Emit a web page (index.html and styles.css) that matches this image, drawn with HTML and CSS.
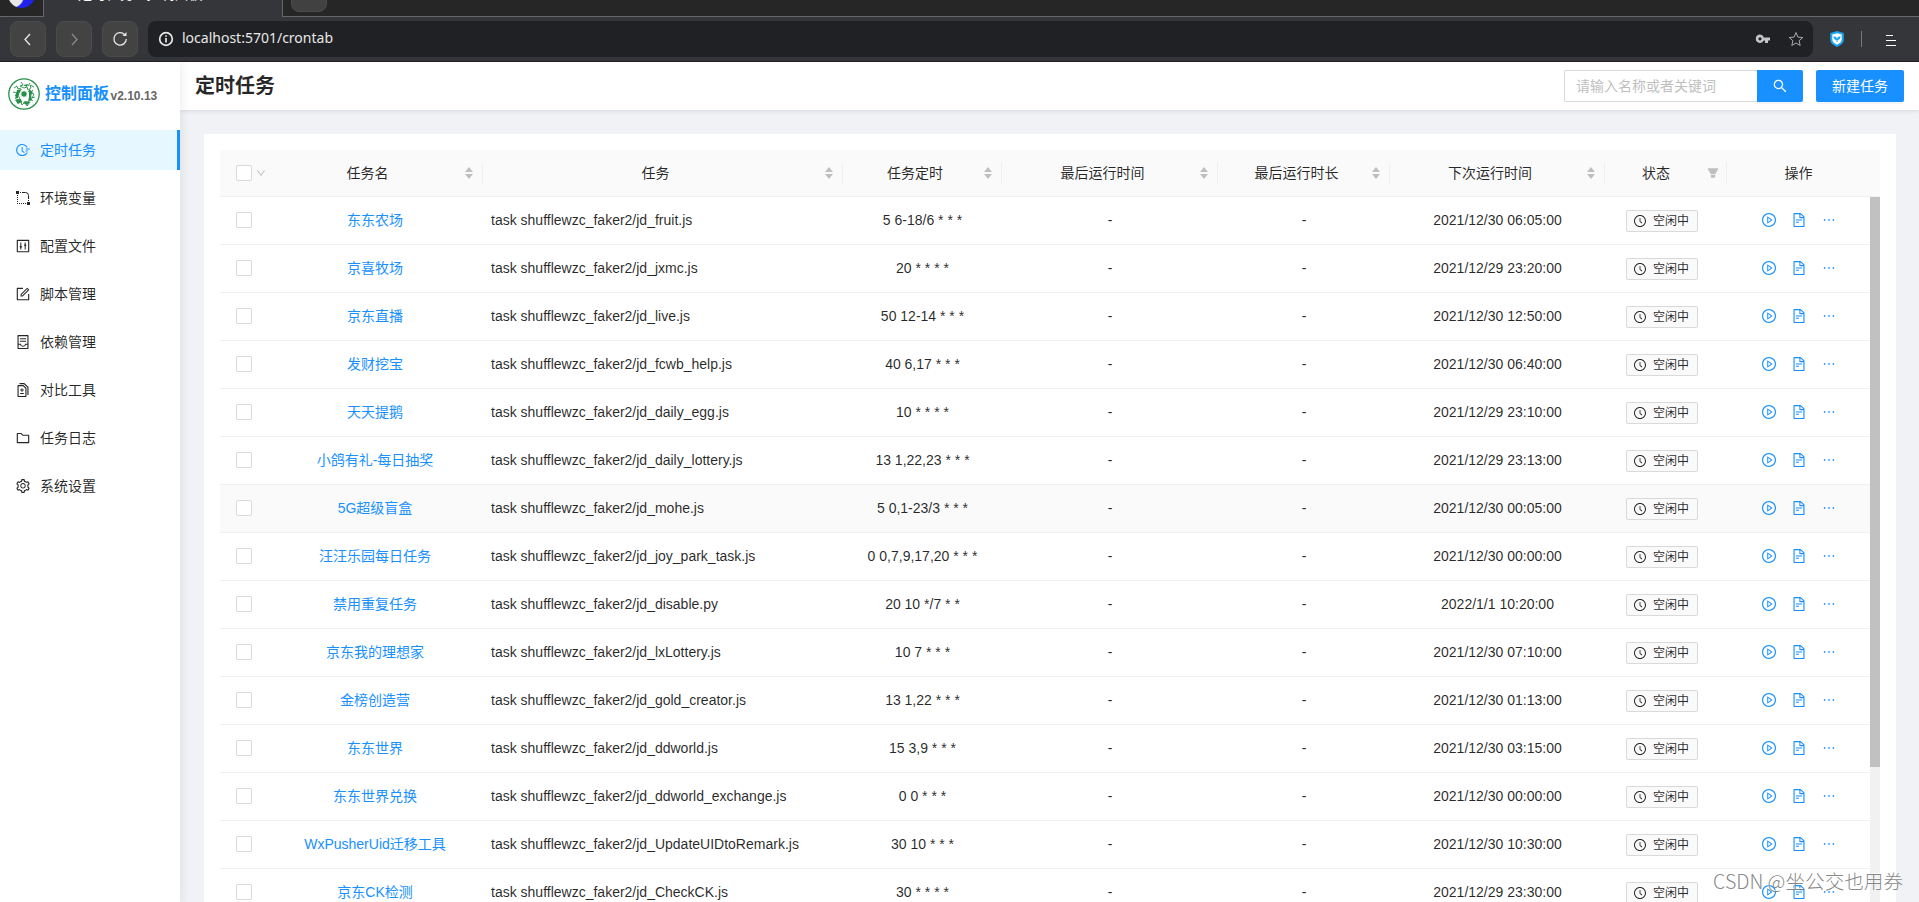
FILE: index.html
```html
<!DOCTYPE html>
<html lang="zh-CN">
	<head>
		<meta charset="utf-8">
		<title>定时任务 - 控制面板</title>
		<link rel="stylesheet" href="styles.css">
	</head>
	<body>
		<svg class="sprite" xmlns="http://www.w3.org/2000/svg">
			<symbol id="i-time" viewBox="64 64 896 896"><path d="M945 412H689c-4.400 0-8 3.600-8 8v48c0 4.400 3.600 8 8 8h256c4.400 0 8-3.600 8-8v-48c0-4.400-3.600-8-8-8zM811 548H689c-4.400 0-8 3.600-8 8v48c0 4.400 3.600 8 8 8h122c4.400 0 8-3.600 8-8v-48c0-4.400-3.600-8-8-8zM477.300 322.500H434c-6.200 0-11.200 5-11.200 11.200v248c0 3.600 1.700 6.900 4.600 9l148.900 108.600c5 3.600 12 2.600 15.600-2.400l25.700-35.100v-.1c3.600-5 2.500-12-2.500-15.600l-126.700-91.600V333.700c.1-6.200-5-11.200-11.100-11.200z"/><path d="M804.800 673.900H747c-5.600 0-10.900 2.900-13.900 7.700a321 321 0 01-44.500 55.700 317.170 317.170 0 01-101.300 68.300c-39.300 16.600-81 25-124 25-43.100 0-84.800-8.400-124-25-37.900-16-72-39-101.300-68.300s-52.300-63.400-68.300-101.300c-16.600-39.200-25-80.900-25-124 0-43.100 8.400-84.700 25-124 16-37.900 39-72 68.300-101.300 29.300-29.300 63.400-52.300 101.300-68.300 39.200-16.600 81-25 124-25 43.100 0 84.800 8.400 124 25 37.900 16 72 39 101.300 68.300a321 321 0 0144.500 55.700c3 4.800 8.300 7.700 13.900 7.700h57.800c6.900 0 11.300-7.200 8.200-13.300-65.200-129.700-197.400-214-345-215.700-216.100-2.700-395.600 174.200-396 390.100C71.600 727.500 246.900 903 463.300 903c149.500 0 283.900-84.600 349.800-215.800a9.180 9.180 0 00-8.300-13.300z"/></symbol>
			<symbol id="i-env" viewBox="0 0 14 14"><path d="M0 0h3v3H0zM11 11h3v3h-3zM4 1h1v1H4zM1 4h1v1H1zM1 6h1v1H1zM1 8h1v1H1zM1 10h1v1H1zM1 12h1v1H1zM3 12h1v1H3zM5 12h1v1H5zM7 12h1v1H7zM9 12h1v1H9zM12 9h1v1h-1z"/><path d="M6 1.500h3.500a3 3 0 0 1 3 3V8" fill="none" stroke="currentColor"/></symbol>
			<symbol id="i-control" viewBox="64 64 896 896"><path d="M880 112H144c-17.700 0-32 14.300-32 32v736c0 17.700 14.300 32 32 32h736c17.700 0 32-14.300 32-32V144c0-17.700-14.300-32-32-32zm-40 728H184V184h656v656z"/><path d="M340 288h64v210a76 76 0 0 1 0 134v104h-64V632a76 76 0 0 1 0-134zM620 288h64v104a76 76 0 0 1 0 134v210h-64V526a76 76 0 0 1 0-134z"/></symbol>
			<symbol id="i-form" viewBox="64 64 896 896"><path d="M904 512h-56c-4.400 0-8 3.600-8 8v320H184V184h320c4.400 0 8-3.600 8-8v-56c0-4.400-3.600-8-8-8H144c-17.700 0-32 14.300-32 32v736c0 17.700 14.300 32 32 32h736c17.700 0 32-14.300 32-32V520c0-4.400-3.600-8-8-8z"/><path d="M355.900 534.900L354 653.800c-.1 8.900 7.100 16.200 16 16.200h.4l118-2.900c2-.1 4-.9 5.400-2.300l415.900-415c3.100-3.100 3.100-8.200 0-11.300L785.400 114.300c-1.600-1.600-3.600-2.300-5.700-2.300s-4.100.8-5.700 2.300l-415.800 415a8.300 8.300 0 00-2.300 5.600zm63.500 23.600L779.700 199l45.200 45.100-360.500 359.700-45.700 1.100.7-46.400z"/></symbol>
			<symbol id="i-container" viewBox="64 64 896 896"><path d="M832 64H192c-17.700 0-32 14.300-32 32v832c0 17.700 14.300 32 32 32h640c17.700 0 32-14.300 32-32V96c0-17.700-14.300-32-32-32zm-40 824H232V687h97.900c11.600 32.800 32 62.300 59.100 84.700 34.500 28.500 78.200 44.300 123 44.300s88.500-15.700 123-44.300c27.100-22.400 47.500-51.900 59.100-84.700H792v201zm0-264H643.600l-5.200 24.700C626.400 708.500 573.200 752 512 752s-114.400-43.500-126.500-103.300l-5.200-24.700H232V136h560v488zM320 341h384c4.400 0 8-3.600 8-8v-48c0-4.400-3.600-8-8-8H320c-4.400 0-8 3.600-8 8v48c0 4.400 3.600 8 8 8zm0 160h384c4.400 0 8-3.600 8-8v-48c0-4.400-3.600-8-8-8H320c-4.400 0-8 3.600-8 8v48c0 4.400 3.600 8 8 8z"/></symbol>
			<symbol id="i-diff" viewBox="64 64 896 896"><path d="M476 399.200c0-3.900-3.100-7.200-7-7.200h-42c-3.800 0-7 3.200-7 7.200V484h-84.500c-4.100 0-7.500 3.100-7.500 7v42c0 3.800 3.400 7 7.500 7H420v84.800c0 3.900 3.200 7.200 7 7.200h42c3.900 0 7-3.200 7-7.200V540h84.500c4.100 0 7.500-3.200 7.500-7v-42c0-3.900-3.400-7-7.500-7H476v-84.800zM560.500 704h-225c-4.100 0-7.500 3.200-7.500 7v42c0 3.800 3.400 7 7.500 7h225c4.100 0 7.500-3.200 7.500-7v-42c0-3.800-3.400-7-7.500-7zm-7.100-502.600c-6-6-14.200-9.400-22.700-9.400H192c-17.700 0-32 14.300-32 32v704c0 17.700 14.300 32 32 32h512c17.700 0 32-14.300 32-32V397.300c0-8.500-3.400-16.600-9.400-22.600L553.400 201.400zM664 888H232V264h282.200L664 413.800V888zm190.200-581.400L611.300 72.900c-6-5.700-13.900-8.900-22.200-8.900H296c-4.400 0-8 3.600-8 8v56c0 4.400 3.600 8 8 8h277l219 210.600V824c0 4.400 3.600 8 8 8h56c4.400 0 8-3.600 8-8V329.600c0-8.700-3.500-17-9.800-23z"/></symbol>
			<symbol id="i-folder" viewBox="64 64 896 896"><path d="M880 298.400H521L403.700 186.200a8.150 8.150 0 00-5.500-2.200H144c-17.700 0-32 14.300-32 32v592c0 17.700 14.300 32 32 32h736c17.700 0 32-14.300 32-32V330.400c0-17.700-14.300-32-32-32zM840 768H184V256h188.500l119.600 114.400H840V768z"/></symbol>
			<symbol id="i-setting" viewBox="64 64 896 896"><path d="M924.800 625.700l-65.500-56c3.100-19 4.700-38.400 4.700-57.800s-1.600-38.800-4.700-57.800l65.500-56a32.030 32.030 0 009.300-35.200l-.9-2.600a443.740 443.740 0 00-79.700-137.900l-1.800-2.100a32.120 32.120 0 00-35.100-9.500l-81.300 28.900c-30-24.600-63.500-44-99.700-57.600l-15.700-85a32.050 32.050 0 00-25.800-25.700l-2.700-.5c-52.100-9.400-106.900-9.400-159 0l-2.700.5a32.050 32.050 0 00-25.800 25.700l-15.800 85.400a351.860 351.860 0 00-99 57.400l-81.900-29.100a32 32 0 00-35.100 9.500l-1.800 2.100a446.020 446.020 0 00-79.700 137.900l-.9 2.600c-4.500 12.500-.8 26.500 9.300 35.200l66.300 56.600c-3.100 18.800-4.600 38-4.600 57.100 0 19.200 1.500 38.400 4.600 57.100L99 625.500a32.030 32.030 0 00-9.300 35.200l.9 2.600c18.100 50.400 44.900 96.900 79.700 137.900l1.800 2.100a32.120 32.120 0 0035.100 9.500l81.900-29.100c29.800 24.500 63.100 43.900 99 57.400l15.800 85.400a32.050 32.050 0 0025.800 25.700l2.700.5a449.400 449.400 0 00159 0l2.700-.5a32.050 32.050 0 0025.800-25.700l15.700-85a350 350 0 0099.700-57.600l81.300 28.900a32 32 0 0035.100-9.500l1.800-2.100c34.800-41.100 61.600-87.500 79.700-137.900l.9-2.600c4.500-12.300.8-26.300-9.300-35zM788.300 465.900c2.500 15.100 3.800 30.600 3.800 46.100s-1.300 31-3.800 46.100l-6.600 40.100 74.700 63.900a370.030 370.030 0 01-42.600 73.600L721 702.800l-31.400 25.800c-23.900 19.600-50.500 35-79.300 45.800l-38.100 14.300-17.900 97a377.500 377.500 0 01-85 0l-17.900-97.200-37.800-14.500c-28.500-10.800-55-26.200-78.700-45.700l-31.400-25.900-93.400 33.200c-17-22.900-31.200-47.600-42.600-73.600l75.500-64.500-6.500-40c-2.400-14.900-3.700-30.300-3.700-45.500 0-15.300 1.200-30.600 3.700-45.500l6.500-40-75.500-64.500c11.300-26.100 25.600-50.700 42.600-73.600l93.400 33.200 31.400-25.900c23.700-19.500 50.200-34.900 78.700-45.700l37.900-14.300 17.900-97.200c28.100-3.200 56.800-3.200 85 0l17.900 97 38.100 14.300c28.700 10.800 55.400 26.200 79.300 45.800l31.400 25.800 92.800-32.900c17 22.900 31.200 47.600 42.600 73.600L781.800 426l6.500 39.900zM512 326c-97.200 0-176 78.800-176 176s78.800 176 176 176 176-78.800 176-176-78.800-176-176-176zm79.200 255.200A111.600 111.600 0 01512 614c-29.900 0-58-11.700-79.200-32.800A111.600 111.600 0 01400 502c0-29.900 11.700-58 32.800-79.200C454 401.600 482.100 390 512 390c29.900 0 58 11.600 79.200 32.800A111.600 111.600 0 01624 502c0 29.900-11.700 58-32.800 79.200z"/></symbol>
			<symbol id="i-search" viewBox="64 64 896 896"><path d="M909.600 854.500L649.900 594.800C690.200 542.700 712 479 712 412c0-80.200-31.300-155.400-87.900-212.100-56.600-56.700-132-87.900-212.100-87.900s-155.500 31.300-212.100 87.900C143.200 256.500 112 331.800 112 412c0 80.100 31.300 155.500 87.900 212.100C256.500 680.800 331.800 712 412 712c67 0 130.600-21.800 182.700-62l259.700 259.600a8.200 8.200 0 0011.600 0l43.600-43.500a8.200 8.200 0 000-11.600zM570.400 570.400C528 612.700 471.800 636 412 636s-116-23.300-158.400-65.600C211.300 528 188 471.800 188 412s23.300-116.100 65.600-158.400C296 211.300 352.200 188 412 188s116.100 23.200 158.400 65.600S636 352.200 636 412s-23.300 116.100-65.600 158.400z"/></symbol>
			<symbol id="i-down" viewBox="64 64 896 896"><path d="M884 256h-75c-5.100 0-9.900 2.500-12.900 6.600L512 654.200 227.900 262.600c-3-4.100-7.800-6.600-12.900-6.600h-75c-6.500 0-10.300 7.400-6.500 12.700l352.600 486.100c12.800 17.600 39 17.600 51.700 0l352.600-486.100c3.900-5.300.1-12.700-6.400-12.700z"/></symbol>
			<symbol id="i-filter" viewBox="64 64 896 896"><path d="M349 838c0 17.700 14.200 32 31.800 32h262.400c17.600 0 31.800-14.300 31.800-32V642H349v196zm531.100-684H143.900c-24.500 0-39.800 26.700-27.500 48l221.300 376h348.800l221.300-376c12.100-21.300-3.200-48-27.700-48z"/></symbol>
			<symbol id="i-clock" viewBox="64 64 896 896"><path d="M512 64C264.600 64 64 264.600 64 512s200.600 448 448 448 448-200.600 448-448S759.400 64 512 64zm0 820c-205.400 0-372-166.600-372-372s166.600-372 372-372 372 166.600 372 372-166.600 372-372 372z"/><path d="M686.700 638.600L544.100 535.500V288c0-4.400-3.600-8-8-8H488c-4.400 0-8 3.600-8 8v275.400c0 2.600 1.200 5 3.300 6.500l165.400 120.600c3.600 2.600 8.600 1.800 11.200-1.700l28.600-39c2.600-3.700 1.800-8.700-1.800-11.200z"/></symbol>
			<symbol id="i-play" viewBox="64 64 896 896"><path d="M512 64C264.600 64 64 264.600 64 512s200.600 448 448 448 448-200.600 448-448S759.400 64 512 64zm0 820c-205.400 0-372-166.600-372-372s166.600-372 372-372 372 166.600 372 372-166.600 372-372 372z"/><path d="M719.400 499.100l-296.100-215A15.900 15.900 0 00398 297v430c0 13.100 14.800 20.500 25.300 12.900l296.100-215a15.900 15.900 0 000-25.800zm-257.600 134V390.900L628.500 512 461.800 633.100z"/></symbol>
			<symbol id="i-file" viewBox="64 64 896 896"><path d="M854.600 288.600L639.400 73.400c-6-6-14.100-9.400-22.600-9.400H192c-17.700 0-32 14.300-32 32v832c0 17.700 14.300 32 32 32h640c17.700 0 32-14.300 32-32V311.300c0-8.500-3.400-16.700-9.400-22.700zM790.200 326H602V137.800L790.200 326zm1.800 562H232V136h302v216a42 42 0 0042 42h216v494zM504 618H320c-4.400 0-8 3.600-8 8v48c0 4.400 3.600 8 8 8h184c4.400 0 8-3.600 8-8v-48c0-4.400-3.600-8-8-8zM312 490v48c0 4.400 3.600 8 8 8h384c4.400 0 8-3.600 8-8v-48c0-4.400-3.600-8-8-8H320c-4.400 0-8 3.600-8 8z"/></symbol>
			<symbol id="i-more" viewBox="64 64 896 896"><circle cx="232" cy="511" r="56"/><circle cx="512" cy="511" r="56"/><circle cx="792" cy="511" r="56"/></symbol>
		</svg>

		<div class="browser">
			<div class="tabs">
				<div class="pinned"><span class="favicon"></span></div>
				<div class="tab"><span>定时任务 - 控制面板</span></div>
				<div class="tabs-rest"><span class="new-tab"></span></div>
			</div>
			<div class="toolbar">
				<span class="nav"><svg width="16" height="16" viewBox="0 0 16 16"><path d="M10 3 5 8.500 10 14"/></svg></span>
				<span class="nav off"><svg width="16" height="16" viewBox="0 0 16 16"><path d="M6 3l5 5.500L6 14"/></svg></span>
				<span class="nav"><svg width="16" height="16" viewBox="0 0 16 16"><path d="M12.500 3.500A6.200 6.200 0 1 0 14.300 8"/><path class="solid" d="M10.500 5h4V1z"/></svg></span>
				<div class="address">
					<svg width="16" height="16" viewBox="0 0 16 16"><circle cx="8" cy="8" r="6.300"/><path d="M8 7v4.500M8 4.200v1.600"/></svg>
					<span class="url">localhost:5701/crontab</span>
					<svg class="key" width="16" height="16" viewBox="0 0 16 16"><path d="M5 3.500a4.200 4.200 0 1 0 3.800 6H10V12h3V9.500h2v-3H8.800A4.200 4.200 0 0 0 5 3.500zm0 2.700a1.600 1.600 0 1 1 0 3.200 1.600 1.600 0 0 1 0-3.200z"/></svg>
					<svg class="star" width="16" height="16" viewBox="0 0 16 16"><path d="M8 1.500l1.900 4.600 4.900.4-3.700 3.200 1.100 4.800L8 12l-4.200 2.500 1.100-4.800-3.700-3.200 4.900-.4z"/></svg>
				</div>
				<svg class="shield" width="16" height="16" viewBox="0 0 16 16"><path d="M8 0l6.800 2v6.500c0 3.500-3 5.700-6.800 7.500C4.200 14.200 1.200 12 1.200 8.500V2z" fill="#18a5ee"/><path d="M8 2.300l4.700 1.200v5c0 2.200-1.800 3.800-4.700 5.200-2.900-1.400-4.700-3-4.700-5.200v-5z" fill="#fff"/><path d="M4.500 5.500C6.500 5 8 6.500 8 8c0-1.500 1.500-3 3.500-2.500 0 2.200-1.300 3.500-3 3.500v2h-1V9c-1.700 0-3-1.300-3-3.500z" fill="#18a5ee"/></svg>
				<i class="divider"></i>
				<svg class="menu-btn" width="12" height="12" viewBox="0 0 12 12"><path d="M1 .5h7M1 5.500h10M1 10.500h10"/></svg>
			</div>
		</div>

		<div class="app">
			<aside class="sider">
				<div class="logo">
					<svg width="32" height="32" viewBox="0 0 32 32">
						<circle cx="16" cy="16" r="15.200"/>
						<g class="dragon">
							<path d="M13 4l2 3-3 1 4 2 3-1 1 3 3-2-1-3 4 2M6 10l3-2 1 3 3-1M5 14l4 1-2 3M22 5l-2 3M25 12l-3 3 4 1-2 4 3-1M12 13l-2 4 2 4-4 1M20 13l3 3-1 5 3 2M9 25l4-2 1 4 3-3 2 4 3-4"/>
							<path class="solid" d="M9 12l5-1-3 4-1 5-3 1 1-5zM21 11l4 3-2 3 1 5-4 2 1-5zM7 22l6-1 1 3-4 2zM17 23l5 1-3 3-4-2zM15 7l5-1-1 3z"/>
						</g>
						<circle class="pearl" cx="16" cy="16" r="3.200"/>
					</svg>
					<span class="brand">控制面板</span><span class="version">v2.10.13</span>
				</div>
				<nav class="menu">
					<a class="active"><svg><use href="#i-time"/></svg>定时任务</a>
					<a><svg><use href="#i-env"/></svg>环境变量</a>
					<a><svg><use href="#i-control"/></svg>配置文件</a>
					<a><svg><use href="#i-form"/></svg>脚本管理</a>
					<a><svg><use href="#i-container"/></svg>依赖管理</a>
					<a><svg><use href="#i-diff"/></svg>对比工具</a>
					<a><svg><use href="#i-folder"/></svg>任务日志</a>
					<a><svg><use href="#i-setting"/></svg>系统设置</a>
				</nav>
			</aside>

			<div class="main">
				<header class="header">
					<h1>定时任务</h1>
					<div class="search">
						<input type="text" placeholder="请输入名称或者关键词">
						<button><svg><use href="#i-search"/></svg></button>
					</div>
					<button class="create">新建任务</button>
				</header>
				<div class="card">
					<div class="row head">
						<div class="check"><i class="box"></i><svg><use href="#i-down"/></svg></div>
						<div class="th"><span>任务名</span><i class="sorter"></i></div>
						<div class="th"><span>任务</span><i class="sorter"></i></div>
						<div class="th"><span>任务定时</span><i class="sorter"></i></div>
						<div class="th"><span>最后运行时间</span><i class="sorter"></i></div>
						<div class="th"><span>最后运行时长</span><i class="sorter"></i></div>
						<div class="th"><span>下次运行时间</span><i class="sorter"></i></div>
						<div class="th"><span>状态</span><svg class="filter"><use href="#i-filter"/></svg></div>
						<div class="th"><span>操作</span></div>
					</div>
					<div class="body">
						<div class="rows" id="rows"></div>
						<div class="scrollbar"><div class="thumb"></div></div>
					</div>
				</div>
			</div>
		</div>
		<div class="watermark">CSDN @坐公交也用券</div>
		<script src="script.js"></script>
	</body>
</html>
```
FILE: styles.css
```css
* {
	box-sizing: border-box;
}

body {
	margin: 0;
	height: 902px;
	overflow: hidden;
	display: flex;
	flex-direction: column;
	font: 14px/22px "Liberation Sans", "Noto Sans CJK SC", sans-serif;
	color: rgba(0, 0, 0, 0.85);
	background: #f0f2f5;
}

.sprite {
	display: none;
}

svg {
	fill: currentColor;
	flex: none;
}

/* browser frame */

.browser {
	flex: none;
	height: 62px;
	background: #35363a;
	border-bottom: 1px solid #241f26;
}

.tabs {
	display: flex;
	height: 17px;
}

.pinned, .tabs-rest {
	background: #262626;
	border-bottom: 1px solid #67676a;
	overflow: hidden;
}

.pinned {
	width: 44px;
	border-right: 1px solid #67676a;
}

.favicon {
	display: block;
	width: 27px;
	height: 27px;
	margin: -19px 0 0 8px;
	border-radius: 50%;
	background: radial-gradient(circle at 4px 15px, #e8e8e8 11px, #2222ee 12.5px);
}

.tab {
	width: 238px;
	padding-left: 34px;
	overflow: hidden;
	color: #fff;
}

.tab span {
	display: block;
	margin-top: -16px;
	line-height: 20px;
}

.tabs-rest {
	flex: 1;
	border-left: 1px solid #67676a;
}

.new-tab {
	display: block;
	width: 36px;
	height: 36px;
	margin: -24px 0 0 8px;
	border-radius: 8px;
	background: #414141;
	border: 1px solid #4b4b4b;
}

.toolbar {
	display: flex;
	align-items: center;
	gap: 10px;
	padding: 4px 22px 4px 10px;
	color: #e8e8e8;
}

.toolbar svg {
	fill: none;
	stroke: currentColor;
	stroke-width: 1.3;
}

.nav {
	display: flex;
	align-items: center;
	justify-content: center;
	width: 36px;
	height: 36px;
	border-radius: 8px;
	background: #434343;
	border: 1px solid #4b4b4b;
}

.nav.off {
	color: #8a8a8a;
}

.toolbar .solid {
	fill: currentColor;
	stroke: none;
}

.address {
	flex: 1;
	display: flex;
	align-items: center;
	height: 36px;
	padding: 0 9px 0 10px;
	border-radius: 8px;
	background: #202124;
}

.address svg:first-child {
	stroke-width: 1.7;
}

.url {
	flex: 1;
	padding: 0 0 3px 8px;
	font: 14px/20px "Noto Sans", sans-serif;
}

.address .key {
	margin-right: 17px;
	fill: #c4c4c4;
	fill-rule: evenodd;
	stroke: none;
}

.address .star {
	stroke-width: 1;
	color: #aaa;
}

.toolbar .shield {
	margin: 0 6px;
	stroke: none;
}

.divider {
	width: 1px;
	height: 16px;
	margin-right: 13px;
	background: #77777a;
}

.toolbar .menu-btn {
	stroke-width: 1;
	margin-top: 3px;
	color: #fff;
}

/* layout */

.app {
	flex: 1;
	min-height: 0;
	display: flex;
}

.sider {
	width: 180px;
	background: #fff;
	box-shadow: 2px 0 8px rgba(29, 35, 41, 0.08);
	z-index: 1;
}

.logo {
	display: flex;
	align-items: center;
	height: 68px;
	padding: 0 8px 4px;
}

.logo svg {
	fill: none;
	stroke: #27904a;
	stroke-width: 1.3;
}

.logo .dragon {
	stroke-width: 0.9;
}

.logo .solid {
	fill: #27904a;
	stroke: none;
}

.logo .pearl {
	fill: #27904a;
	stroke: #fff;
	stroke-width: 0.8;
}

.brand {
	margin-left: 5px;
	font-size: 16px;
	font-weight: bold;
	color: #1890ff;
}

.version {
	margin: 4px 0 0 1.5px;
	font-size: 12px;
	font-weight: bold;
	color: #666;
}

.menu a {
	display: flex;
	align-items: center;
	height: 40px;
	margin-bottom: 8px;
	padding-left: 16px;
}

.menu svg {
	width: 14px;
	height: 14px;
	margin-right: 10px;
}

.menu .active {
	color: #1890ff;
	background: #e6f7ff;
	border-right: 3px solid #1890ff;
}

.main {
	flex: 1;
	display: flex;
	flex-direction: column;
	min-height: 0;
}

.header {
	flex: none;
	display: flex;
	align-items: center;
	height: 48px;
	padding: 0 15px;
	background: #fff;
	box-shadow: 0 1px 4px rgba(0, 21, 41, 0.12);
}

h1 {
	flex: 1;
	margin: 0;
	padding-bottom: 1px;
	font-size: 20px;
	line-height: 32px;
}

.search {
	display: flex;
	margin-right: 13px;
}

.search input {
	width: 193px;
	height: 32px;
	padding: 4px 11px;
	border: 1px solid #d9d9d9;
	border-right: 0;
	border-radius: 2px 0 0 2px;
	font: inherit;
}

.search input::placeholder {
	color: #bfbfbf;
}

button {
	display: flex;
	align-items: center;
	justify-content: center;
	height: 32px;
	padding: 0;
	border: 0;
	border-radius: 2px;
	background: #1890ff;
	color: #fff;
	font: inherit;
	box-shadow: 0 2px 0 rgba(0, 0, 0, 0.045);
}

.search button {
	width: 46px;
	border-radius: 0 2px 2px 0;
}

.search svg {
	width: 14px;
	height: 14px;
}

.create {
	width: 88px;
}

/* table */

.card {
	flex: 1;
	min-height: 0;
	display: flex;
	flex-direction: column;
	margin: 24px 23px 0 24px;
	padding: 16px 16px 0;
	background: #fff;
}

.row {
	display: grid;
	grid-template-columns: 47px 216px 360px 159px 216px 172px 215px 122px 143px;
	align-items: center;
	height: 48px;
	padding-bottom: 1px;
	border-bottom: 1px solid #f0f0f0;
	text-align: center;
}

.row.hover, .row.head {
	background: #fafafa;
}

.row.head {
	flex: none;
	height: 47px;
	padding: 0;
}

.check {
	display: flex;
	align-items: center;
	padding-left: 16px;
}

.box {
	width: 16px;
	height: 16px;
	border: 1px solid #d9d9d9;
	border-radius: 2px;
	background: #fff;
}

.check svg {
	width: 10px;
	height: 10px;
	margin-left: 4px;
	color: #bfbfbf;
}

.th {
	display: flex;
	align-items: center;
	padding: 0 8px;
	height: 22px;
	box-shadow: inset -1px 0 #f0f0f0;
}

.th:last-child {
	box-shadow: none;
}

.th span {
	flex: 1;
}

.sorter {
	width: 8px;
	margin: 0 2px 0 5px;
}

.sorter::before, .sorter::after {
	content: "";
	display: block;
	border: 4px solid transparent;
	border-top: 0;
	border-bottom: 5px solid #bfbfbf;
}

.sorter::after {
	margin-top: 2px;
	border-top: 5px solid #bfbfbf;
	border-bottom: 0;
}

.filter {
	width: 12px;
	height: 12px;
	margin: 0 0 0 8px;
	color: #bfbfbf;
}

.body {
	flex: 1;
	min-height: 0;
	display: flex;
	overflow: hidden;
}

.rows {
	flex: 1;
}

.name {
	color: #1890ff;
}

.command {
	padding-left: 8px;
	text-align: left;
}

.status {
	display: flex;
	justify-content: center;
	padding: 2px 8px 0 0;
}

.tag {
	display: flex;
	align-items: center;
	height: 22px;
	padding: 0 8px 0 7px;
	border: 1px solid #d9d9d9;
	border-radius: 2px;
	background: #fafafa;
	font-size: 12px;
	line-height: 20px;
}

.tag svg {
	width: 12px;
	height: 12px;
	margin-right: 7px;
}

.actions {
	display: flex;
	justify-content: center;
	gap: 16px;
	color: #1890ff;
}

.actions svg {
	width: 14px;
	height: 14px;
}

.scrollbar {
	width: 10px;
	background: #f1f1f1;
}

.thumb {
	height: 570px;
	background: #c1c1c1;
}

.watermark {
	position: absolute;
	right: 16px;
	bottom: 7px;
	font: 19.6px/28px "Noto Sans CJK SC", sans-serif;
	font-weight: 300;
	color: rgba(120, 120, 120, 0.9);
	text-shadow: -1px -1px 0 rgba(255, 255, 255, 0.7);
	z-index: 2;
}
```
FILE: script.js
```js
// name, script, schedule, next run
var tasks = [
	['东东农场', 'jd_fruit.js', '5 6-18/6 * * *', '2021/12/30 06:05:00'],
	['京喜牧场', 'jd_jxmc.js', '20 * * * *', '2021/12/29 23:20:00'],
	['京东直播', 'jd_live.js', '50 12-14 * * *', '2021/12/30 12:50:00'],
	['发财挖宝', 'jd_fcwb_help.js', '40 6,17 * * *', '2021/12/30 06:40:00'],
	['天天提鹅', 'jd_daily_egg.js', '10 * * * *', '2021/12/29 23:10:00'],
	['小鸽有礼-每日抽奖', 'jd_daily_lottery.js', '13 1,22,23 * * *', '2021/12/29 23:13:00'],
	['5G超级盲盒', 'jd_mohe.js', '5 0,1-23/3 * * *', '2021/12/30 00:05:00'],
	['汪汪乐园每日任务', 'jd_joy_park_task.js', '0 0,7,9,17,20 * * *', '2021/12/30 00:00:00'],
	['禁用重复任务', 'jd_disable.py', '20 10 */7 * *', '2022/1/1 10:20:00'],
	['京东我的理想家', 'jd_lxLottery.js', '10 7 * * *', '2021/12/30 07:10:00'],
	['金榜创造营', 'jd_gold_creator.js', '13 1,22 * * *', '2021/12/30 01:13:00'],
	['东东世界', 'jd_ddworld.js', '15 3,9 * * *', '2021/12/30 03:15:00'],
	['东东世界兑换', 'jd_ddworld_exchange.js', '0 0 * * *', '2021/12/30 00:00:00'],
	['WxPusherUid迁移工具', 'jd_UpdateUIDtoRemark.js', '30 10 * * *', '2021/12/30 10:30:00'],
	['京东CK检测', 'jd_CheckCK.js', '30 * * * *', '2021/12/29 23:30:00']
];
var hovered = 6;

function icon(id) {
	return '<svg><use href="#i-' + id + '"/></svg>';
}

function buildRow(task, index) {
	return '<div class="row' + (index == hovered ? ' hover' : '') + '">' +
		'<div class="check"><i class="box"></i></div>' +
		'<div class="name">' + task[0] + '</div>' +
		'<div class="command">task shufflewzc_faker2/' + task[1] + '</div>' +
		'<div>' + task[2] + '</div>' +
		'<div>-</div>' +
		'<div>-</div>' +
		'<div>' + task[3] + '</div>' +
		'<div class="status"><span class="tag">' + icon('clock') + '空闲中</span></div>' +
		'<div class="actions">' + icon('play') + icon('file') + icon('more') + '</div>' +
		'</div>';
}

document.getElementById('rows').innerHTML = tasks.map(buildRow).join('');
```
